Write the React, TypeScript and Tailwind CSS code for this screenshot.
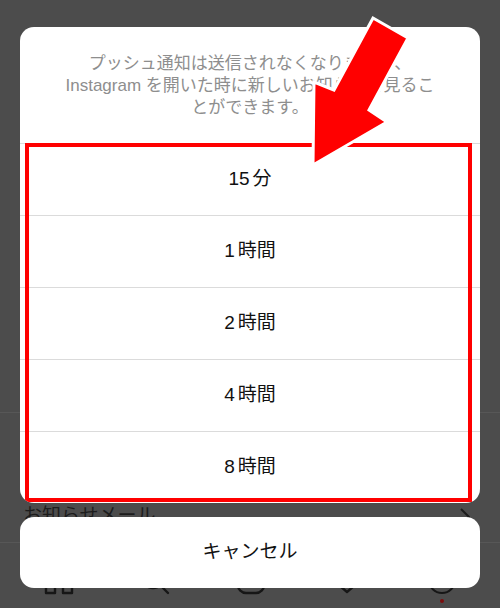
import React from "react";

const options = ["15", "1", "2", "4", "8"];

function TabIcons() {
  return (
    <div className="flex h-[66px] items-start justify-around border-t border-[#575757] px-[10px] pt-[22px]">
      {/* home */}
      <svg width="32" height="30" viewBox="0 0 32 30" fill="none" stroke="#161616" strokeWidth="2.4">
        <path d="M3 28 V12 L16 2 L29 12 V28 H20 V19 H12 V28 Z" strokeLinejoin="round" />
      </svg>
      {/* search */}
      <svg width="30" height="30" viewBox="0 0 30 30" fill="none" stroke="#161616" strokeWidth="2.4">
        <circle cx="13" cy="13" r="10" />
        <path d="M20 20 L28 28" strokeLinecap="round" />
      </svg>
      {/* reels */}
      <svg width="30" height="30" viewBox="0 0 30 30" fill="none" stroke="#161616" strokeWidth="2.4">
        <rect x="2" y="2" width="26" height="26" rx="8" />
      </svg>
      {/* heart */}
      <svg width="30" height="30" viewBox="0 0 30 30" fill="none" stroke="#161616" strokeWidth="2.4">
        <path d="M15 27 C6 20 2 15 2 9.5 C2 5.5 5 2.5 9 2.5 C12 2.5 14 4.5 15 6.5 C16 4.5 18 2.5 21 2.5 C25 2.5 28 5.5 28 9.5 C28 15 24 20 15 27 Z" strokeLinejoin="round" />
      </svg>
      {/* profile */}
      <div className="flex flex-col items-center">
        <svg width="30" height="30" viewBox="0 0 30 30" fill="none" stroke="#161616" strokeWidth="2">
          <circle cx="15" cy="15" r="13" />
        </svg>
        <div className="mt-[4px] h-[4px] w-[4px] rounded-full bg-[#7a0d0d]" />
      </div>
    </div>
  );
}

export default function App() {
  return (
    <div
      className="relative h-[608px] w-[500px] overflow-hidden bg-[#4c4c4c]"
      style={{ fontFamily: '"Liberation Sans", "Noto Sans CJK JP", sans-serif' }}
    >
      {/* dimmed page behind the sheet */}
      <div className="flex h-full flex-col justify-end">
        <div className="h-[65px] border-t border-[#575757]" />
        <div className="flex h-[65px] items-center justify-between pl-[23px] pr-[30px] pt-[14px]">
          <span className="text-[19px] text-[#1c1c1c]">お知らせメール</span>
          <svg width="10" height="18" viewBox="0 0 10 18" fill="none" stroke="#1c1c1c" strokeWidth="2">
            <path d="M1 1 L9 9 L1 17" />
          </svg>
        </div>
        <TabIcons />
      </div>

      {/* action sheet */}
      <div className="absolute inset-0 flex flex-col px-[20px] pt-[27px]">
        <div className="overflow-hidden rounded-[14px] bg-white">
          <div className="border-b border-[#dbdbdb] px-[20px] pb-[24px] pt-[26px] text-center text-[17px] leading-[22px] text-[#8e8e8e]">
            プッシュ通知は送信されなくなりますが、
            <br />
            Instagram を開いた時に新しいお知らせを見るこ
            <br />
            とができます。
          </div>
          <div className="relative">
            {options.map((n, i) => (
              <div
                key={n}
                className={
                  i < options.length - 1
                    ? "flex h-[72px] items-center justify-center border-b border-[#dbdbdb] text-[19px] text-[#111111]"
                    : "flex h-[71px] items-center justify-center text-[19px] text-[#111111]"
                }
              >
                <span className="mr-[3px]">{n}</span>
                {n === "15" ? "分" : "時間"}
              </div>
            ))}
            <div className="absolute -top-[1px] bottom-[1px] left-[5px] right-[8px] border-[4px] border-[#ff0000]" />
          </div>
        </div>
        <div className="mt-[14px] flex h-[71px] items-center justify-center rounded-[14px] bg-white text-[19px] text-[#111111]">
          キャンセル
        </div>
      </div>

      {/* red arrow annotation */}
      <svg className="pointer-events-none absolute inset-0" width="500" height="608" viewBox="0 0 500 608">
        <polygon
          points="313,165 314,82 334,90 373,18 408,38 369,110 387,122"
          fill="#ff0000"
          stroke="#ffffff"
          strokeWidth="3"
          strokeLinejoin="miter"
        />
      </svg>
    </div>
  );
}
